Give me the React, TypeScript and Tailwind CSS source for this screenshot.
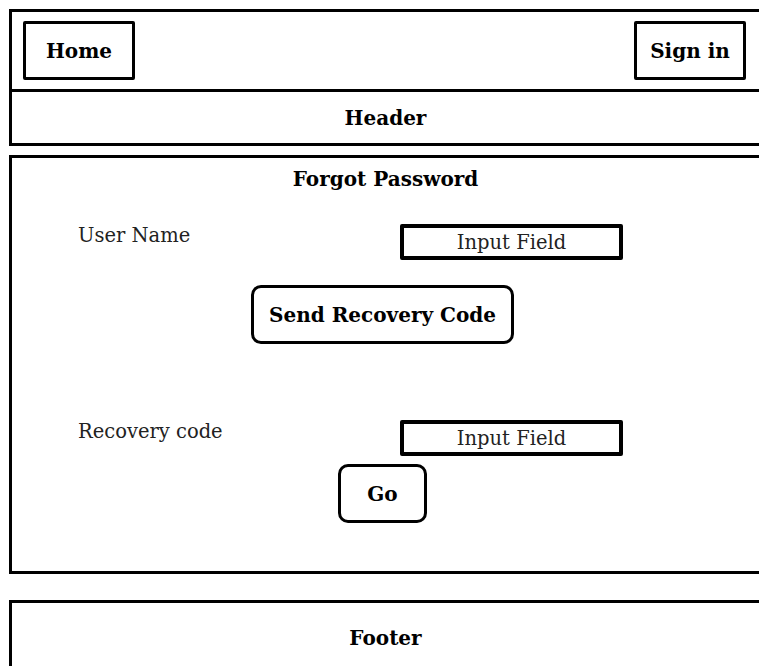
import { ReactNode } from 'react'

// Wireframe: forgot password page
function BoxButton({ children, className = '' }: { children: ReactNode; className?: string }) {
  return (
    <div
      className={`flex items-center justify-center border-[3px] border-black text-[20px] font-bold text-black ${className}`}
    >
      {children}
    </div>
  )
}

function FieldRow({ label }: { label: string }) {
  return (
    <div className="flex items-start text-[19.5px]">
      <div className="w-[388px] pl-[66px] pt-[2px] leading-[20px] text-[#222]">{label}</div>
      <div className="flex h-[36px] w-[223px] items-center justify-center rounded-[2px] border-[4px] border-black pt-[2px] text-[#222]">
        Input Field
      </div>
    </div>
  )
}

export default function App() {
  return (
    <div
      className="h-[666px] w-[759px] overflow-hidden bg-white pl-[9px] pt-[9px]"
      style={{ fontFamily: '"DejaVu Serif", "Liberation Serif", serif' }}
    >
      {/* nav */}
      <div className="flex h-[83px] items-start justify-between border-[3px] border-r-0 border-black pl-[11px] pr-[13px] pt-[9px]">
        <BoxButton className="h-[59px] w-[112px] rounded-[2px]">Home</BoxButton>
        <BoxButton className="h-[59px] w-[112px] rounded-[2px]">Sign in</BoxButton>
      </div>

      {/* header */}
      <div className="flex h-[54px] items-center justify-center border-[3px] border-r-0 border-t-0 border-black text-[20px] font-bold text-black">
        Header
      </div>

      {/* main */}
      <div className="mt-[9px] flex h-[419px] flex-col border-[3px] border-r-0 border-black">
        <div className="mt-[9px] text-center text-[20px] font-bold leading-[24px] text-black">Forgot Password</div>

        <div className="mt-[33px]">
          <FieldRow label="User Name" />
        </div>

        <BoxButton className="ml-[239px] mt-[25px] h-[59px] w-[263px] rounded-[10px]">Send Recovery Code</BoxButton>

        <div className="mt-[76px]">
          <FieldRow label="Recovery code" />
        </div>

        <BoxButton className="ml-[326px] mt-[8px] h-[59px] w-[89px] rounded-[10px]">Go</BoxButton>
      </div>

      {/* footer */}
      <div className="mt-[26px] flex h-[80px] items-start justify-center border-[3px] border-b-0 border-r-0 border-black pt-[20px] text-[20px] font-bold text-black">
        Footer
      </div>
    </div>
  )
}
